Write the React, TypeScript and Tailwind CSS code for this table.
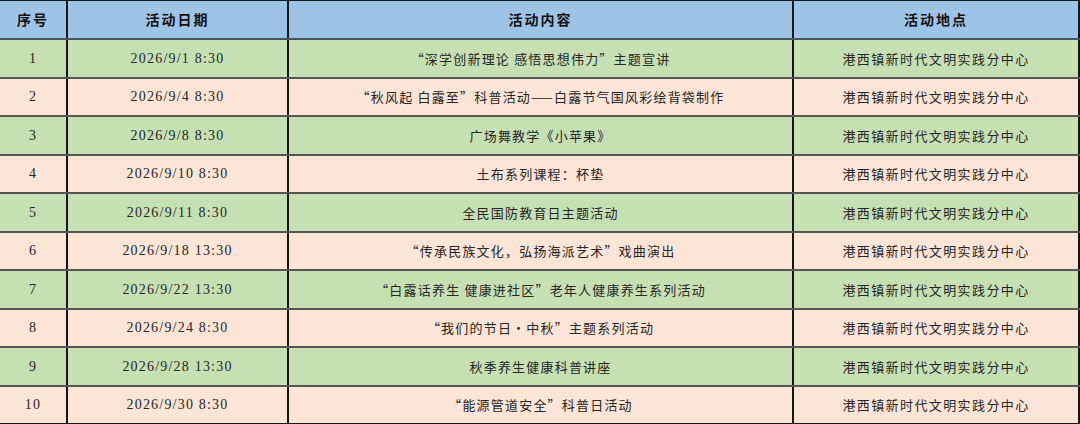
const rows = [
  { no: "1", date: "2026/9/1 8:30", content: "“深学创新理论 感悟思想伟力”主题宣讲" },
  { no: "2", date: "2026/9/4 8:30", content: "“秋风起 白露至”科普活动——白露节气国风彩绘背袋制作" },
  { no: "3", date: "2026/9/8 8:30", content: "广场舞教学《小苹果》" },
  { no: "4", date: "2026/9/10 8:30", content: "土布系列课程：杯垫" },
  { no: "5", date: "2026/9/11 8:30", content: "全民国防教育日主题活动" },
  { no: "6", date: "2026/9/18 13:30", content: "“传承民族文化，弘扬海派艺术”戏曲演出" },
  { no: "7", date: "2026/9/22 13:30", content: "“白露话养生 健康进社区”老年人健康养生系列活动" },
  { no: "8", date: "2026/9/24 8:30", content: "“我们的节日·中秋”主题系列活动" },
  { no: "9", date: "2026/9/28 13:30", content: "秋季养生健康科普讲座" },
  { no: "10", date: "2026/9/30 8:30", content: "“能源管道安全”科普日活动" },
];

const place = "港西镇新时代文明实践分中心";

const cjk = { fontFamily: '"Noto Sans CJK SC", "Noto Sans", sans-serif' };
const serif = { fontFamily: '"Liberation Serif", "Noto Sans CJK SC", serif' };

const cell = "flex items-center justify-center border-r-2 border-[#161616] h-full";

export default function App() {
  return (
    <div className="w-[1080px] h-[424px] bg-white text-[#262626] border-t border-[#161616] flex flex-col" style={cjk}>
      {/* Header */}
      <div className="grid grid-cols-[68px_221px_505px_286px] h-[39px] bg-[#9dc3e6] border-b-2 border-[#4b5560] shrink-0 text-[#111]">
        {["序号", "活动日期", "活动内容", "活动地点"].map((h) => (
          <div key={h} className={`${cell} text-[14px] font-bold tracking-[2px]`}>
            {h}
          </div>
        ))}
      </div>

      {/* Rows */}
      {rows.map((r, i) => (
        <div
          key={r.no}
          className={`grid grid-cols-[68px_221px_505px_286px] h-[38.5px] shrink-0 border-b-2 ${
            i === rows.length - 1 ? "border-[#161616]" : "border-[#555555]"
          } ${i % 2 === 0 ? "bg-[#c6e0b4]" : "bg-[#fce4d6]"}`}
        >
          <div className={`${cell} text-[14px] tracking-[1.2px]`} style={serif}>
            {r.no}
          </div>
          <div className={`${cell} text-[14px] tracking-[1.2px] whitespace-pre`} style={serif}>
            {r.date}
          </div>
          <div className={`${cell} text-[13px] tracking-[1.2px] whitespace-pre`}>{r.content}</div>
          <div className={`${cell} text-[13px] tracking-[1.4px]`}>{place}</div>
        </div>
      ))}
    </div>
  );
}
